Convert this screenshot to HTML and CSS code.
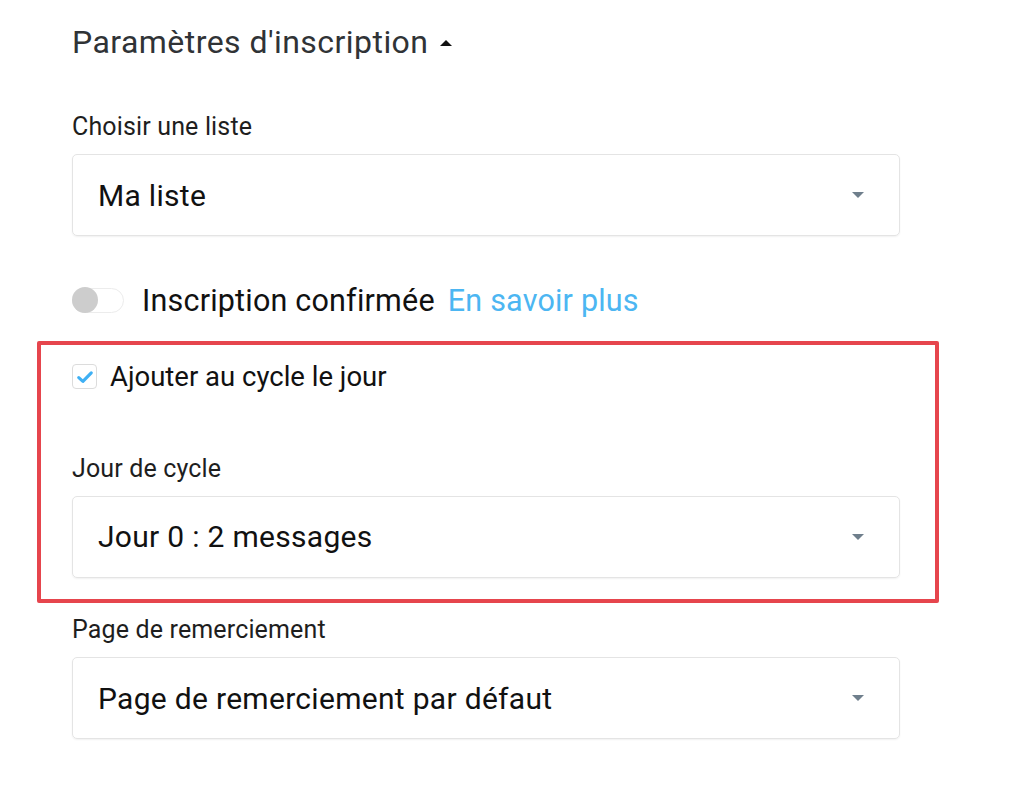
FILE: index.html
```html
<!DOCTYPE html>
<html lang="fr">
<head>
<meta charset="utf-8">
<link rel="stylesheet" href="styles.css">
</head>
<body>
<main class="panel">
  <h2 class="title">Paramètres d'inscription <span class="caret-up"></span></h2>

  <div class="field field-first">
    <label class="label">Choisir une liste</label>
    <div class="select"><span>Ma liste</span><span class="caret-down"></span></div>
  </div>

  <div class="toggle-row">
    <span class="toggle"><span class="knob"></span></span>
    <span class="toggle-text">Inscription confirmée</span>
    <a class="link">En savoir plus</a>
  </div>

  <section class="highlight">
    <div class="check-row">
      <span class="checkbox">
        <svg viewBox="0 0 24 24" width="20" height="20"><path d="M4.5 12.8l5 4.4L19.5 7" fill="none" stroke="#3fb0f4" stroke-width="3.8" stroke-linecap="round" stroke-linejoin="round"/></svg>
      </span>
      <span class="check-text">Ajouter au cycle le jour</span>
    </div>
    <div class="field field-cycle">
      <label class="label">Jour de cycle</label>
      <div class="select"><span>Jour 0 : 2 messages</span><span class="caret-down"></span></div>
    </div>
  </section>

  <div class="field field-thanks">
    <label class="label">Page de remerciement</label>
    <div class="select"><span>Page de remerciement par défaut</span><span class="caret-down"></span></div>
  </div>
</main>
</body>
</html>
```

FILE: styles.css
```css
* { box-sizing: border-box; }
html, body { margin: 0; padding: 0; background: #fff; }
body {
  font-family: Roboto, "Liberation Sans", sans-serif;
  color: #111;
  width: 1024px;
  height: 793px;
  overflow: hidden;
}
.panel {
  padding: 20px 0 0 72px;
  width: 900px;
}
.title {
  margin: 0;
  font-weight: 400;
  font-size: 32px;
  letter-spacing: 0.45px;
  line-height: 44px;
  color: #303336;
  display: flex;
  align-items: center;
}
.caret-up {
  display: inline-block;
  margin-left: 12px;
  margin-top: 1px;
  width: 0; height: 0;
  border-left: 6px solid transparent;
  border-right: 6px solid transparent;
  border-bottom: 6px solid #111;
}
.label {
  display: block;
  font-size: 25px;
  letter-spacing: 0.15px;
  line-height: 28px;
  color: #1e1e1e;
  margin-bottom: 13px;
}
.field-first { margin-top: 49px; }
.select {
  height: 82px;
  width: 828px;
  border: 1.5px solid #e4e4e4;
  border-radius: 5px;
  box-shadow: 0 1px 2px rgba(0,0,0,0.06);
  display: flex;
  align-items: center;
  justify-content: space-between;
  padding: 0 35px 0 25px;
  font-size: 30px;
  letter-spacing: 0.3px;
  color: #111;
}
.caret-down {
  width: 0; height: 0;
  border-left: 6px solid transparent;
  border-right: 6px solid transparent;
  border-top: 6px solid #6f7f8c;
}
.toggle-row {
  display: flex;
  align-items: center;
  margin-top: 49px;
  height: 30px;
}
.toggle {
  width: 52px;
  height: 25px;
  border: 1.5px solid #ececec;
  border-radius: 13px;
  background: #fff;
  display: flex;
  align-items: center;
}
.knob {
  width: 26px; height: 26px;
  margin-left: -1px;
  border-radius: 50%;
  background: #cdcdcd;
}
.toggle-text {
  font-size: 30.5px;
  letter-spacing: 0.2px;
  margin-left: 18px;
  color: #111;
}
.link {
  font-size: 30.5px;
  letter-spacing: 0.2px;
  margin-left: 13px;
  color: #4cb6f2;
}
.highlight {
  margin: 26px 0 0 -35px;
  width: 902px;
  border: 4px solid #e6454d;
  border-radius: 2px;
  padding: 16.5px 0 21.5px 31px;
}
.check-row {
  display: flex;
  align-items: center;
  height: 30px;
}
.checkbox {
  width: 25px; height: 25px;
  border: 1.5px solid #dcdcdc;
  border-radius: 4px;
  display: flex;
  align-items: center;
  justify-content: center;
}
.check-text {
  font-size: 27.5px;
  margin-left: 13px;
  color: #111;
}
.field-cycle { margin-top: 63px; }
.field-thanks { margin-top: 13px; }
```
